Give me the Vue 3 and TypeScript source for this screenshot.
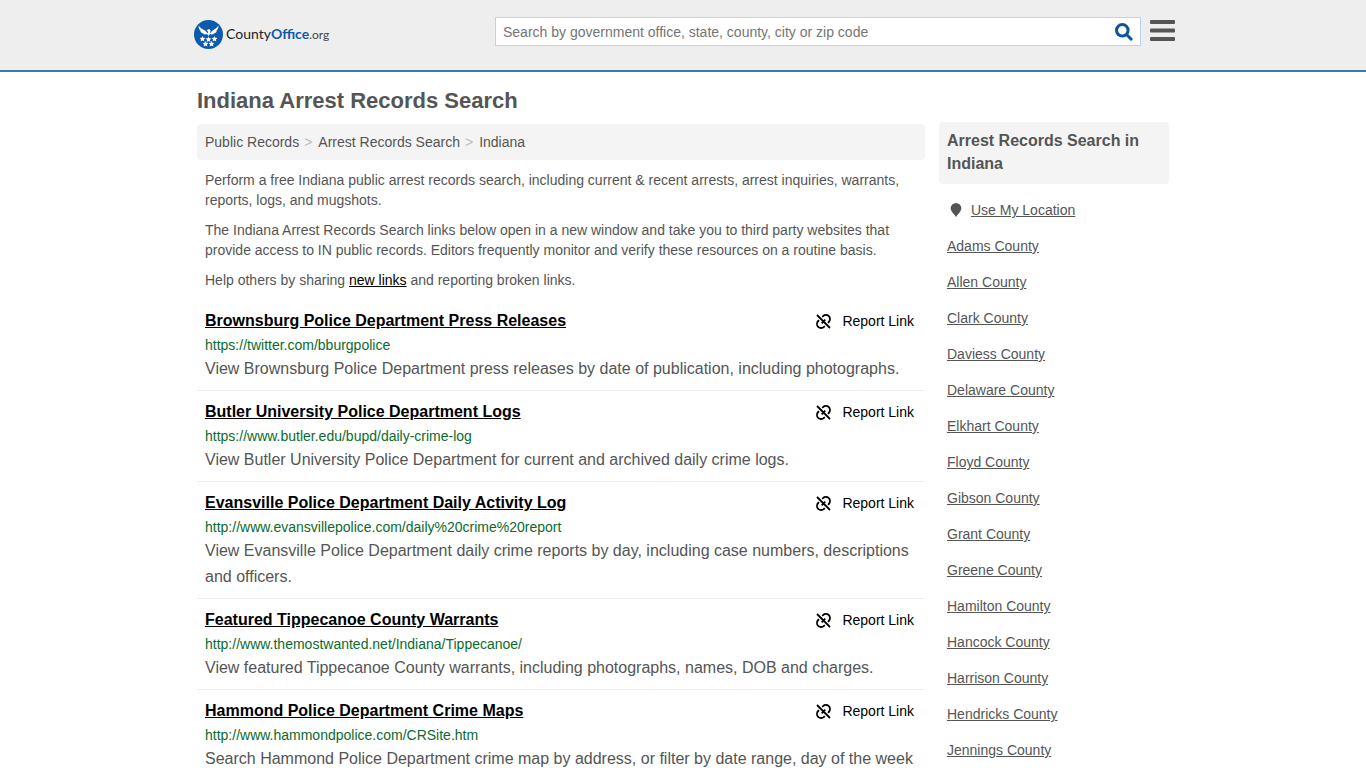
<script setup lang="ts">
interface RecordLink {
  title: string
  url: string
  description: string
}

const records: RecordLink[] = [
  {
    title: 'Brownsburg Police Department Press Releases',
    url: 'https://twitter.com/bburgpolice',
    description: 'View Brownsburg Police Department press releases by date of publication, including photographs.',
  },
  {
    title: 'Butler University Police Department Logs',
    url: 'https://www.butler.edu/bupd/daily-crime-log',
    description: 'View Butler University Police Department for current and archived daily crime logs.',
  },
  {
    title: 'Evansville Police Department Daily Activity Log',
    url: 'http://www.evansvillepolice.com/daily%20crime%20report',
    description: 'View Evansville Police Department daily crime reports by day, including case numbers, descriptions and officers.',
  },
  {
    title: 'Featured Tippecanoe County Warrants',
    url: 'http://www.themostwanted.net/Indiana/Tippecanoe/',
    description: 'View featured Tippecanoe County warrants, including photographs, names, DOB and charges.',
  },
  {
    title: 'Hammond Police Department Crime Maps',
    url: 'http://www.hammondpolice.com/CRSite.htm',
    description: 'Search Hammond Police Department crime map by address, or filter by date range, day of the week',
  },
]

const counties: string[] = [
  'Adams', 'Allen', 'Clark', 'Daviess', 'Delaware', 'Elkhart', 'Floyd', 'Gibson',
  'Grant', 'Greene', 'Hamilton', 'Hancock', 'Harrison', 'Hendricks', 'Jennings',
]
</script>

<template>
  <div class="page">
    <header class="header">
      <div class="container header-row">
        <a class="logo" href="#" aria-label="CountyOffice.org">
          <svg class="emblem" viewBox="0 0 58 58" aria-hidden="true">
            <circle cx="29" cy="29" r="29" fill="#0c5aae" />
            <g fill="#fff">
              <path d="M9 11c4 5 9 8 14 11l5 5 0-4-3-2 3-2c3-1 5 0 5 3l-1 5 4-5c5-3 9-6 13-11 0 6-2 10-6 12l3-1c-2 4-5 5-8 5l2 1c-3 1-6 1-8 0l-3 4-3-4c-3 1-6 1-8 0l2-1c-4 0-6-2-8-5l3 1c-4-2-6-6-6-12z" />
              <path id="star" d="M17 32l1.700 3.700 4.100.500-3 2.800.900 4.100-3.700-2.100-3.700 2.100.900-4.100-3-2.800 4.100-.500z" />
              <use href="#star" x="12" y="1" />
              <use href="#star" x="24" />
              <use href="#star" x="6" y="10" />
              <use href="#star" x="18" y="10" />
            </g>
          </svg>
          <span class="wordmark">County<b>Office</b><span class="tld">.org</span></span>
        </a>
        <form class="search" role="search" @submit.prevent>
          <input type="search" aria-label="Search" placeholder="Search by government office, state, county, city or zip code" />
          <button type="submit" aria-label="Search">
            <svg viewBox="0 0 18 18" aria-hidden="true">
              <circle cx="7.300" cy="7.300" r="5.800" />
              <path d="M11.500 11.500l5.500 5.500" />
            </svg>
          </button>
        </form>
        <button class="menu" type="button" aria-label="Menu">
          <svg viewBox="0 0 25 22" aria-hidden="true">
            <rect width="25" height="4" rx="1" />
            <rect y="8.500" width="25" height="4" rx="1" />
            <rect y="17" width="25" height="4" rx="1" />
          </svg>
        </button>
      </div>
    </header>

    <div class="container content">
      <main class="main">
        <h1>Indiana Arrest Records Search</h1>
        <nav class="crumbs" aria-label="Breadcrumb">
          <a href="#">Public Records</a><i>&gt;</i><a href="#">Arrest Records Search</a><i>&gt;</i><span>Indiana</span>
        </nav>
        <div class="intro">
          <p>Perform a free Indiana public arrest records search, including current &amp; recent arrests, arrest inquiries, warrants, reports, logs, and mugshots.</p>
          <p>The Indiana Arrest Records Search links below open in a new window and take you to third party websites that provide access to IN public records. Editors frequently monitor and verify these resources on a routine basis.</p>
          <p>Help others by sharing <a href="#">new links</a> and reporting broken links.</p>
        </div>
        <ul class="records">
          <li v-for="record in records" :key="record.url">
            <div class="record-head">
              <a class="title" href="#">{{ record.title }}</a>
              <button class="report" type="button">
                <svg viewBox="0 0 15 15" aria-hidden="true">
                  <path d="M1 1l13 13M6.200 2.900l.8-.7a4 4 0 0 1 5.800 5.800l-.8.800M8.800 12.100l-.8.700a4 4 0 0 1-5.800-5.800l.8-.800M9.300 5.700l-3.600 3.600" />
                </svg>
                Report Link
              </button>
            </div>
            <div class="url">{{ record.url }}</div>
            <p class="description">{{ record.description }}</p>
          </li>
        </ul>
      </main>

      <aside class="sidebar">
        <h2>Arrest Records Search in Indiana</h2>
        <ul>
          <li>
            <svg class="pin" viewBox="0 0 12 14" aria-hidden="true">
              <path d="M6 0a5.300 5.300 0 0 1 5.300 5.300C11.300 8.500 8 11 6 14 4 11 .7 8.500.7 5.300A5.300 5.300 0 0 1 6 0z" />
            </svg>
            <a href="#">Use My Location</a>
          </li>
          <li v-for="county in counties" :key="county"><a href="#">{{ county }} County</a></li>
        </ul>
      </aside>
    </div>
  </div>
</template>

<style>
body {
  margin: 0;
  background: #fff;
}
</style>

<style scoped>
.page {
  color: #555;
  font: 14px/20px "Liberation Sans", Arial, sans-serif;
}
.container {
  box-sizing: border-box;
  max-width: 980px;
  margin: 0 auto;
  padding: 0 4px;
}
.header {
  background: #eee;
  border-bottom: 2px solid #337ab7;
}
.header-row {
  display: flex;
  align-items: flex-start;
  height: 70px;
  padding: 0 0 0 1px;
}
.logo {
  display: flex;
  align-items: center;
  gap: 3px;
  margin-top: 20px;
  color: #222;
  text-decoration: none;
}
.emblem {
  width: 29px;
  height: 29px;
}
.wordmark {
  font: 14px/20px Lato, sans-serif;
}
.wordmark b {
  color: #0c5aae;
}
.tld {
  color: #444;
  font-size: 12px;
}
.search {
  display: flex;
  box-sizing: border-box;
  width: 646px;
  height: 29px;
  margin: 17px 9px 0 auto;
  border: 1px solid #bcd3e8;
  background: #fff;
}
.search input {
  flex: 1;
  min-width: 0;
  padding: 0 7px;
  border: 0;
  background: none;
  color: #555;
  font: 14px/20px "Liberation Sans", Arial, sans-serif;
  appearance: none;
  outline: 0;
}
.search input::placeholder {
  color: #757575;
}
.search button {
  display: flex;
  align-items: center;
  justify-content: center;
  width: 32px;
  padding: 0;
  border: 0;
  background: none;
}
.search svg {
  width: 18px;
  height: 18px;
  fill: none;
  stroke: #0f529c;
  stroke-width: 3;
}
.menu {
  width: 25px;
  height: 22px;
  margin: 20px -2px 0 0;
  padding: 0;
  border: 0;
  background: none;
}
.menu svg {
  display: block;
  width: 25px;
  height: 22px;
  fill: #555;
}
.content {
  display: flex;
  gap: 14px;
}
.main {
  flex: 1;
  min-width: 0;
}
h1 {
  margin: 15px 0 9px;
  font-size: 22px;
  line-height: 28px;
}
.crumbs {
  padding: 8px;
  border-radius: 4px;
  background: #f4f4f4;
}
.crumbs a {
  color: inherit;
  text-decoration: none;
}
.crumbs i {
  margin: 0 6px 0 5px;
  color: #bbb;
  font-style: normal;
}
.intro {
  padding: 10px 8px;
}
.intro p {
  margin: 0 0 10px;
}
.intro p:last-child {
  margin: 0;
}
.intro a {
  color: #000;
}
.records,
.sidebar ul {
  margin: 0;
  padding: 0;
  list-style: none;
}
.records li {
  padding: 9px 8px 8px;
  border-bottom: 1px solid #eee;
}
.records li:last-child {
  padding-bottom: 0;
  border-bottom: 0;
}
.record-head {
  display: flex;
  align-items: center;
  justify-content: space-between;
  height: 24px;
  margin-bottom: 2px;
}
.title {
  color: #000;
  font-size: 16px;
  font-weight: bold;
}
.report {
  display: flex;
  align-items: center;
  gap: 11px;
  padding: 0 3px;
  border: 0;
  background: none;
  color: #000;
  font: 14px/20px "Liberation Sans", Arial, sans-serif;
}
.report svg {
  width: 15px;
  height: 15px;
  fill: none;
  stroke: #000;
  stroke-width: 1.8;
}
.url {
  color: #0a6b2d;
}
.description {
  margin: 1px 0 0;
  font-size: 16px;
  line-height: 26px;
}
.sidebar {
  width: 230px;
  padding-top: 50px;
}
h2 {
  margin: 0 0 8px;
  padding: 7px 8px 9px;
  border-radius: 4px;
  background: #f4f4f4;
  font-size: 16px;
  line-height: 23px;
}
.sidebar li {
  display: flex;
  align-items: center;
  height: 36px;
  padding: 0 8px;
}
.sidebar a {
  color: #555;
}
.pin {
  width: 12px;
  height: 14px;
  margin: 0 9px 0 3px;
  fill: #555;
}
</style>
